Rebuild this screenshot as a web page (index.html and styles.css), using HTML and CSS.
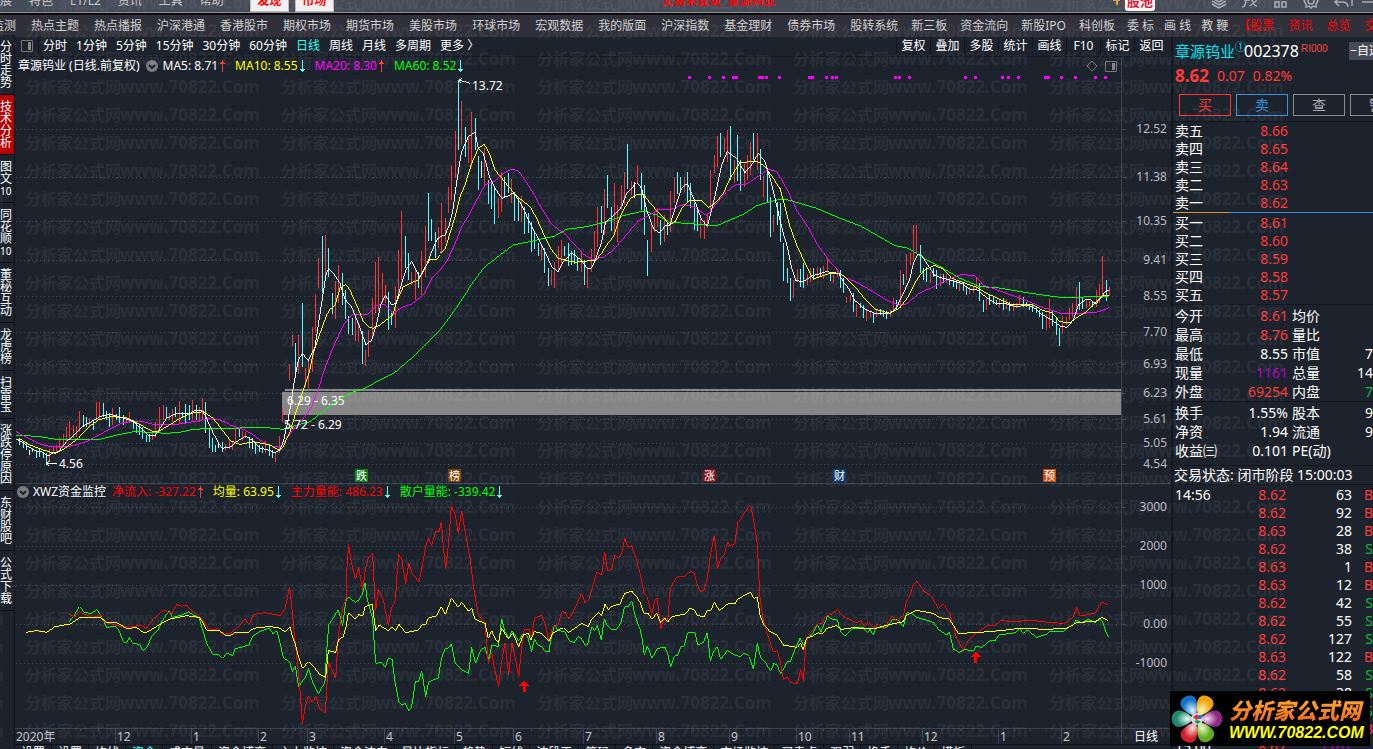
FILE: index.html
```html
<!DOCTYPE html>
<html lang="zh-CN">
<head>
<meta charset="utf-8">
<title>章源钨业 002378 日线</title>
<link rel="stylesheet" href="styles.css">
</head>
<body>
<div class="app">
  <header class="topbar">
    <div class="topbar-row">
      <nav class="menu"><button>扩展</button><button>特色</button><button>L1/L2</button><button>资讯</button><button>工具</button><button>帮助</button></nav>
      <div class="menu-tabs"><button>发现</button><button>市场</button></div>
      <div class="login">交易未登录&nbsp; 章源钨业</div>
      <div class="top-tools">
        <svg width="8" height="14" viewBox="0 0 8 14"><path d="M2 0h5v7H5v4H3V7H0z" fill="#d9a441"/></svg>
        <button class="pool">股池</button>
        <svg class="ico gap-l" width="16" height="16" viewBox="0 0 16 16"><path d="M1 5l7 4 7-4M1 8l7 4 7-4M1 11l7 4 7-4"/></svg>
        <svg class="ico" width="18" height="16" viewBox="0 0 18 16"><path d="M1 14c3 0 3-2 4-6s2-7 5-6M3 7h6M9 13l7-6M10 7c3 0 2 6 6 6"/></svg>
        <svg class="ico" width="16" height="16" viewBox="0 0 16 16"><path d="M2 2h4v4H2zM9 2h4v4H9zM2 9h4v5H2zM9 9h4v5H9z"/></svg>
        <svg class="ico" width="16" height="16" viewBox="0 0 16 16"><circle cx="8" cy="8" r="3"/><path d="M8 1l2 2 3-1 0 3 2 3-2 3v3l-3-1-2 2-2-2-3 1v-3L1 8l2-3V2l3 1z"/></svg>
        <svg class="ico" width="16" height="16" viewBox="0 0 16 16"><path d="M15 14c0-4-2-5-6-5H2M6 5L2 9l4 4"/></svg>
        <svg class="ico last" width="26" height="16" viewBox="0 0 26 16"><path d="M1 0v13M11 9h12"/></svg>
      </div>
    </div>
  </header>

  <nav class="markets">
    <div class="g1"><button>监测</button><button>热点主题</button><button>热点播报</button><button>沪深港通</button><button>香港股市</button><button>期权市场</button><button>期货市场</button><button>美股市场</button><button>环球市场</button><button>宏观数据</button><button>我的版面</button><button>沪深指数</button><button>基金理财</button><button>债券市场</button><button>股转系统</button></div>
    <div class="g2"><button>新三板</button><button>资金流向</button><button>新股IPO</button><button>科创板</button></div>
    <div class="g3"><button>委 标</button><button>画 线</button><button>教 鞭</button></div>
    <div class="g4"><button>【股票</button><button>资讯</button><button>总览</button><button>交易</button></div>
  </nav>

  <div class="body">
    <aside class="rail">
      <button>分时走势</button><button class="on">技术分析</button><button>图文<i>10</i></button><button>同花顺<i>10</i></button><button>董秘互动</button><button>龙虎榜</button><button>扫雷宝</button><button>涨跌停原因</button><button>东财股吧</button><button>公式下载</button>
    </aside>

    <main class="center">
      <div class="toolbar">
        <button class="split" aria-label="侧栏"><svg width="12" height="12" viewBox="0 0 12 12"><path d="M.5.5h11v11H.5z" fill="none" stroke="#777"/><path d="M7 2h3v8H7z" fill="#888"/></svg></button>
        <div class="periods"><button>分时</button><button>1分钟</button><button>5分钟</button><button>15分钟</button><button>30分钟</button><button>60分钟</button><button class="on">日线</button><button>周线</button><button>月线</button><button>多周期</button><button>更多 〉</button></div>
        <div class="actions"><button>复权</button><button>叠加</button><button>多股</button><button>统计</button><button>画线</button><button>F10</button><button>标记</button><button>返回</button></div>
      </div>

      <div class="legend">
        <div class="legend-in">
          <span class="title">章源钨业 (日线.前复权)</span>
          <svg class="fold" width="12" height="12" viewBox="0 0 12 12"><circle cx="6" cy="6" r="6" fill="#7d7d7d"/><path d="M3 5l3 3 3-3" fill="none" stroke="#1d232d" stroke-width="2"/></svg>
          <span class="w">MA5: 8.71<svg class="arr" viewBox="0 0 7 14"><path d="M3 1v12M1 4h5M2 3h3" stroke="#ff3b3b"/></svg></span>
          <span class="y">MA10: 8.55<svg class="arr" viewBox="0 0 7 14"><path d="M3 1v12M1 10h5M2 11h3" stroke="#5ff"/></svg></span>
          <span class="m">MA20: 8.30<svg class="arr" viewBox="0 0 7 14"><path d="M3 1v12M1 4h5M2 3h3" stroke="#ff3b3b"/></svg></span>
          <span class="g">MA60: 8.52<svg class="arr" viewBox="0 0 7 14"><path d="M3 1v12M1 10h5M2 11h3" stroke="#5ff"/></svg></span>
          <svg class="corner" width="32" height="12" viewBox="0 0 32 12"><g fill="none" stroke="#777"><path d="M6 1l5 5-5 5-5-5z"/><path d="M19.500 1.500h11v10h-11z"/></g><path d="M26 3h3v7h-3z" fill="#888"/></svg>
        </div>
      </div>

      <svg class="chart" viewBox="15 76 1156 408" role="img" aria-label="日线价格图">
        <path class="grid" d="M16 129.500H1120M16 177.500H1120M16 221.500H1120M16 260.500H1120M16 296.500H1120M16 332.500H1120M16 364.500H1120M16 393.500H1120M16 419.500H1120M16 443.500H1120M16 464.500H1120"/>
        <path class="frame" d="M1121.500 76V484M1121 129.500h5M1121 177.500h5M1121 221.500h5M1121 260.500h5M1121 296.500h5M1121 332.500h5M1121 364.500h5M1121 393.500h5M1121 419.500h5M1121 443.500h5M1121 464.500h5M15 483.500H1171"/>
        <path fill="#868686" d="M285 389H1121V391H285zM282 392H1121V415H282z"/>
        <path fill="#f0f" d="M688 76h3v3h-3zM708 76h3v3h-3zM722 76h3v3h-3zM732 76h6v3h-6zM758 76h6v3h-6zM765 76h3v3h-3zM778 76h3v3h-3zM808 76h6v3h-6zM825 76h3v3h-3zM831 76h3v3h-3zM835 76h3v3h-3zM894 76h3v3h-3zM898 76h3v3h-3zM908 76h3v3h-3zM964 76h3v3h-3zM974 76h3v3h-3zM1001 76h3v3h-3zM1007 76h3v3h-3zM1017 76h3v3h-3zM1044 76h6v3h-6zM1060 76h3v3h-3zM1074 76h3v3h-3zM1094 76h3v3h-3zM1104 76h3v3h-3z"/>

        <g class="seg" transform="translate(0 370) scale(.33333)">
          <path class="c" d="M58 205V225M70 215V235M79 218V240M97 235V245M109 240V265M118 235V262M130 245V265M139 250V285M250 135V170M259 142V170M280 150V180M310 98V140M319 122V150M328 130V172M349 132V150M358 112V160M370 135V165M400 150V178M409 160V190M418 165V195M427 170V207M440 195V215M449 192V215M500 110V145M527 110V140M547 125V142M557 102V160M568 105V150M589 105V150M616 95V188M628 175V235M637 205V245M646 225V245M667 215V247"/>
          <path class="r" d="M148 237V275M160 232V250M169 225V245M178 200V235M190 193V225M199 172V220M208 152V210M220 165V205M229 168V200M238 122V185M268 145V170M289 97V155M298 95V150M337 115V165M379 140V160M388 125V160M458 190V210M467 155V205M478 110V185M490 105V150M508 130V150M517 118V155M538 92V160M577 90V150M598 110V155M607 83V150M676 222V240M688 210V237"/>
          <path class="w" d="M88 240V255M657 215V235"/>
          <path class="g" d="M48 195 120 200 180 210 240 210 300 208 350 195 400 185 450 187 500 190 540 187 580 178 640 175 690 176"/>
          <path class="m" d="M48 185 80 202 120 222 150 230 215 228 260 215 300 193 340 172 370 157 400 155 430 155 460 163 500 163 540 162 580 155 625 146 660 150 690 163"/>
          <path class="y" d="M48 208 65 210 90 225 130 240 165 250 190 238 235 205 265 172 295 150 330 140 380 143 410 158 440 175 460 185 475 185 500 170 540 145 570 130 610 125 640 145 665 178 690 210"/>
          <path class="w" d="M48 208 60 212 85 230 110 245 125 246 145 258 160 248 175 245 200 215 230 188 250 168 270 157 300 140 330 132 350 138 380 148 400 155 420 172 445 195 465 198 480 175 500 145 530 130 570 130 585 122 605 122 615 135 640 190 665 235 690 232"/>
          <path class="w" d="M172 280H139M148 271 139 280 148 289"/>
        </g>
        <g class="seg" transform="translate(230 190) scale(.33333)">
          <path class="r" d="M7 755V780M16 718V755M37 722V752M46 725V745M106 752V788M136 790V815M148 738V790M157 655V697M178 522V570M187 435V467M205 435V552M226 534V590M235 510V593M247 410V545M256 312V425M265 205V293M286 135V260M316 272V387M325 225V340M376 380V453M385 395V455M406 480V528M415 420V500M427 325V445M436 215V370M445 202V362M457 250V340M466 285V340M496 290V413M505 180V320M514 63V270M544 245V285M556 238V330M574 182V315M586 108V260M625 110V175"/>
          <path class="c" d="M28 718V740M58 740V775M76 755V792M88 765V785M97 768V790M118 762V797M127 780V805M196 460V545M217 340V530M277 138V308M295 175V260M307 310V372M337 250V345M346 300V387M355 378V432M367 385V435M397 423V522M475 305V420M484 370V405M526 138V235M535 188V270M565 245V293M595 10V153M604 88V153M616 125V205"/>
          <path class="g" d="M0 716 60 712 110 713 160 718 200 705 240 695 290 655 340 622 370 605 400 597 450 570 495 547 550 500 600 450 630 420"/>
          <path class="m" d="M0 705 40 718 70 735 100 757 130 770 155 768 190 718 220 685 245 650 262 605 290 520 315 460 340 405 365 375 410 375 445 343 465 345 490 372 515 352 545 343 580 315 605 265 630 240"/>
          <path class="y" d="M0 752 30 763 70 755 120 765 145 780 157 775 180 725 200 660 220 600 238 545 250 490 270 430 290 375 300 358 315 345 330 295 347 283 360 300 380 345 400 395 415 410 430 415 450 405 488 375 500 335 520 290 540 280 565 270 580 240 600 208 622 207 630 195"/>
          <path class="w" d="M67 745V778M0 772 20 755 48 738 65 750 90 775 110 778 135 788 150 780 160 755 172 700 183 640 190 590 205 510 217 490 235 512 255 470 268 385 278 320 288 255 296 235 310 250 330 280 345 328 365 350 385 400 408 465 425 450 440 400 452 345 466 315 485 345 498 340 512 290 528 240 545 213 560 245 570 262 590 225 605 185 622 147 630 143"/>
        </g>
        <g class="seg" transform="translate(440 70) scale(.33333)">
          <path class="r" d="M4 398V545M16 445V515M25 350V430M34 288V390M46 183V325M64 93V225M85 200V280M94 125V290M133 235V345M175 385V445M184 305V425M214 328V400M244 378V455M304 525V570M334 600V645M343 577V655M355 528V600M364 510V580M424 545V605M442 590V655M454 537V605M463 483V575M472 412V530M493 358V495M523 338V487M532 405V515M544 345V420M553 305V405M574 333V375M592 285V340M634 460V545M643 430V485M652 415V470M673 435V515M691 363V485M703 320V400M733 320V365M781 440V505M793 450V507M802 430V475M811 300V430M823 255V310M832 198V290M853 205V245M862 180V275M883 270V340M913 283V350M922 255V330M931 215V315M952 190V300M970 318V380M1000 435V485"/>
          <path class="c" d="M55 30V240M76 170V262M106 143V240M115 258V360M145 330V403M154 330V417M163 350V462M193 320V380M205 310V370M223 365V453M235 380V453M253 410V493M265 430V490M274 455V545M284 490V537M295 520V557M313 535V610M325 595V648M373 528V558M385 518V587M394 543V585M403 540V582M412 560V602M433 570V645M484 408V490M502 315V413M514 410V483M562 222V357M604 308V420M613 345V495M622 510V617M661 450V525M682 455V495M712 305V372M721 320V368M742 305V400M751 340V415M763 400V480M772 410V482M841 188V260M871 168V330M892 195V333M901 270V362M940 190V270M961 238V330M982 298V398M991 380V500M1012 395V465"/>
          <path class="g" d="M0 780 30 740 65 690 100 635 135 590 180 555 220 525 270 515 310 505 340 500 380 478 440 470 500 455 550 437 610 423 650 435 690 457 740 460 830 467 870 450 910 433 950 407 990 395 1020 388"/>
          <path class="m" d="M0 600 20 575 50 510 65 470 90 430 110 390 135 345 165 333 190 310 215 298 235 302 255 330 280 370 305 415 335 463 375 492 400 520 430 552 455 568 490 562 520 540 550 505 595 453 625 437 655 420 690 420 730 403 765 412 800 437 830 400 860 365 885 345 920 342 950 322 985 297 1010 305 1020 323"/>
          <path class="y" d="M0 550 15 538 30 490 45 440 60 380 75 345 95 280 115 235 133 223 150 255 165 300 190 330 210 355 235 382 270 410 290 445 310 490 335 540 355 565 405 577 440 573 465 573 485 550 500 525 520 500 535 455 550 420 570 387 590 373 610 373 635 405 665 437 690 465 705 455 725 415 750 390 785 392 805 412 825 400 850 370 870 325 900 278 950 273 975 290 1000 325 1020 357"/>
          <path class="w" d="M124 272V323M583 335V385M0 500 15 495 28 465 38 425 48 350 58 285 65 245 85 200 105 187 115 235 130 250 150 325 165 355 185 385 205 378 220 368 235 388 250 415 270 460 300 515 315 545 335 590 355 605 370 575 395 548 410 560 425 572 443 598 455 593 468 565 485 515 497 455 520 438 545 410 560 370 590 338 605 355 620 420 640 475 658 490 675 468 690 465 710 400 725 355 742 340 765 395 785 450 802 468 815 420 830 355 845 285 862 245 890 265 915 308 935 285 955 250 975 275 990 325 1005 385 1020 450"/>
          <path class="w" d="M90 40 57 30M67 26 57 30 63 40"/>
        </g>
        <g class="seg" transform="translate(780 120) scale(.33333)">
          <path class="c" d="M1 250V365M10 370V483M22 443V490M31 475V543M61 447V500M70 430V505M100 445V480M121 443V470M151 455V483M181 450V503M190 473V520M220 520V577M241 550V565M250 555V593M280 575V608M301 567V585M310 570V590M319 572V597M349 540V570M370 462V495M421 375V458M430 445V480M439 440V487M460 443V470M469 450V507M490 462V490M508 475V495M520 480V500M529 483V507M550 490V513M559 497V525M598 488V543M610 540V575M628 525V555M640 530V553M649 540V555M670 533V570M688 545V573M730 530V560M739 545V560M748 553V570M757 555V575M769 560V580M778 570V590M787 575V627M817 570V618M829 590V645M838 625V678M898 487V570M907 530V567M937 545V560M979 480V543"/>
          <path class="r" d="M40 480V535M52 447V487M82 463V495M91 443V485M112 440V470M130 438V477M142 418V460M160 465V490M172 447V470M199 530V548M211 525V545M229 552V592M259 568V602M271 570V590M289 570V590M331 570V592M340 535V575M361 450V560M379 402V480M391 398V435M400 315V420M409 315V400M451 455V488M481 462V497M499 463V490M538 488V512M568 500V522M580 498V518M589 475V510M619 537V570M658 537V563M679 538V568M700 548V573M709 550V565M718 525V553M799 583V630M808 537V625M847 588V642M859 590V615M868 563V600M877 548V590M889 500V580M919 537V563M928 543V560M949 510V560M958 492V550M967 408V535M988 500V528"/>
          <path class="g" d="M0 238 25 240 110 265 180 295 240 317 290 345 345 377 385 385 440 420 490 445 540 475 600 500 650 503 740 518 830 531 890 532 985 528"/>
          <path class="m" d="M0 170 25 215 50 270 80 315 110 370 150 425 190 470 230 487 270 510 320 540 350 553 380 552 415 522 460 500 500 480 545 463 585 468 610 495 680 520 740 542 790 563 850 582 945 578 970 570 988 562"/>
          <path class="y" d="M0 205 15 260 30 320 50 375 80 440 100 477 145 462 180 460 200 475 225 500 255 537 285 567 330 580 360 563 385 530 410 480 430 452 462 436 490 447 515 475 590 502 620 520 690 552 760 555 790 572 815 578 840 605 870 608 895 590 920 575 950 545 970 525 988 528"/>
          <path class="w" d="M0 300 10 340 22 380 35 445 48 482 70 485 95 468 140 455 175 460 190 485 208 508 225 542 255 568 290 582 330 580 350 562 370 520 390 475 400 430 412 405 422 403 440 430 465 467 500 478 545 490 570 508 590 508 620 533 650 552 680 552 710 560 745 555 765 565 785 583 815 600 840 618 860 622 880 600 895 555 915 540 930 538 948 552 965 530 975 515 988 510"/>
        </g>

        <g class="note">
          <text x="472" y="90">13.72</text><text x="59" y="468">4.56</text>
          <text x="287" y="405">6.29 - 6.35</text><text x="284" y="429">5.72 - 6.29</text>
        </g>
        <g class="badge">
          <rect x="355" y="469" width="13" height="13" fill="#0a7a12"/><text x="356" y="480">跌</text>
          <rect x="448" y="469" width="13" height="13" fill="#7d3c00"/><text x="449" y="480">榜</text>
          <rect x="703" y="469" width="13" height="13" fill="#7d0d14"/><text x="704" y="480">涨</text>
          <rect x="833" y="469" width="13" height="13" fill="#073a70"/><text x="834" y="480">财</text>
          <rect x="1043" y="469" width="13" height="13" fill="#c24a0c"/><text x="1044" y="480">预</text>
        </g>
        <g class="scale">
          <text x="1167" y="133">12.52</text><text x="1167" y="181">11.38</text><text x="1167" y="225">10.35</text><text x="1167" y="264">9.41</text><text x="1167" y="300">8.55</text><text x="1167" y="336">7.70</text><text x="1167" y="368">6.93</text><text x="1167" y="397">6.23</text><text x="1167" y="423">5.61</text><text x="1167" y="447">5.05</text><text x="1167" y="468">4.54</text>
        </g>
      </svg>

      <div class="legend low">
        <div class="legend-in">
          <svg class="fold" width="12" height="12" viewBox="0 0 12 12"><circle cx="6" cy="6" r="6" fill="#7d7d7d"/><path d="M3 5l3 3 3-3" fill="none" stroke="#1d232d" stroke-width="2"/></svg>
          <span class="title">XWZ资金监控</span>
          <span class="r">净流入: -327.22<svg class="arr" viewBox="0 0 7 14"><path d="M3 1v12M1 4h5M2 3h3" stroke="#ff3b3b"/></svg></span>
          <span class="y">均量: 63.95<svg class="arr" viewBox="0 0 7 14"><path d="M3 1v12M1 10h5M2 11h3" stroke="#5ff"/></svg></span>
          <span class="r">主力量能: 486.23<svg class="arr" viewBox="0 0 7 14"><path d="M3 1v12M1 10h5M2 11h3" stroke="#5ff"/></svg></span>
          <span class="g">散户量能: -339.42<svg class="arr" viewBox="0 0 7 14"><path d="M3 1v12M1 10h5M2 11h3" stroke="#5ff"/></svg></span>
        </div>
      </div>

      <svg class="chart" viewBox="15 500 1156 244" role="img" aria-label="资金监控图">
        <path class="grid" d="M16 507.500H1120M16 546.500H1120M16 585.500H1120M16 624.500H1120M16 663.500H1120"/>
        <path class="frame" d="M1121.500 500V744M1121 507.500h5M1121 546.500h5M1121 585.500h5M1121 624.500h5M1121 663.500h5M15 728.500H1171M115.500 729v15M191.500 729v15M258.500 729v15M307.500 729v15M384.500 729v15M454.500 729v15M513.500 729v15M583.500 729v15M656.500 729v15M729.500 729v15M796.500 729v15M849.500 729v15M922.500 729v15M998.500 729v15M1061.500 729v15M80.500 729v2M98.500 729v2M134.500 729v2M153.500 729v2M172.500 729v2M209.500 729v2M225.500 729v2M242.500 729v2M270.500 729v2M283.500 729v2M295.500 729v2M327.500 729v2M346.500 729v2M365.500 729v2M402.500 729v2M419.500 729v2M437.500 729v2M469.500 729v2M484.500 729v2M499.500 729v2M531.500 729v2M548.500 729v2M566.500 729v2M602.500 729v2M620.500 729v2M638.500 729v2M675.500 729v2M693.500 729v2M711.500 729v2M746.500 729v2M763.500 729v2M780.500 729v2M810.500 729v2M823.500 729v2M836.500 729v2M868.500 729v2M886.500 729v2M904.500 729v2M941.500 729v2M960.500 729v2M979.500 729v2M1014.500 729v2M1030.500 729v2M1046.500 729v2"/>
        <g class="seg" transform="translate(0 370) scale(.33333)">
          <path class="g" d="M207 755 222 738 238 710 255 728 275 730 290 718 300 732 320 773 345 768 355 777 370 815 380 818 388 802 398 820 418 823 430 843 440 833 455 800 475 780 485 755 508 722 517 742 545 735 565 725 580 735 597 742 605 770 620 820 640 855 658 855 668 865 680 850 690 853"/>
          <path class="f" d="M207 733 225 740 238 725 260 735 275 742 290 740 300 733 310 755 340 763 365 770 400 770 420 765 440 775 460 747 490 720 515 730 530 703 545 709 560 705 575 722 600 740 610 755 630 780 655 776 668 795 680 790 690 790"/>
          <path class="y" d="M78 787 110 782 140 787 165 770 210 762 240 743 300 742 320 757 350 758 380 775 410 773 430 787 440 787 480 763 510 747 560 737 600 743 620 780 660 783 675 795 690 798"/>
        </g>
        <g class="seg" transform="translate(230 485) scale(.33333)">
          <path class="g" d="M0 508 8 513 15 492 57 480 68 453 95 437 118 430 130 447 140 437 148 465 160 517 180 533 187 560 196 543 206 607 217 588 227 577 236 550 247 590 266 627 285 590 290 500 296 420 325 374 338 422 347 350 356 335 375 352 387 345 398 325 405 293 412 345 428 400 433 480 437 535 455 532 466 547 475 520 486 523 495 590 507 650 516 660 525 655 536 677 545 665 556 590 566 590 575 557 587 635 596 590 625 580 634 520 646 490 655 490 664 477 676 535 695 555 716 565 725 487 737 535 752 495 765 487 777 525 785 480 805 485 815 402 825 440 837 460 846 437 866 467 880 445 893 455 905 500 913 463 923 480 935 485 946 500 957 500 965 450 974 420 985 437 1005 440 1018 467 1033 473 1043 455 1053 458 1066 482 1073 478 1085 425 1094 437 1102 420 1114 465 1123 402 1133 423 1145 433 1160 433 1173 412 1184 365 1195 365 1205 347 1215 390 1225 420 1230 433"/>
          <path class="f" d="M0 445 20 430 45 403 58 418 70 388 105 383 150 392 165 372 172 340 179 305 186 370 193 450 205 560 212 640 217 718 225 670 235 632 248 655 257 632 268 670 286 683 295 530 317 580 325 450 340 360 348 345 350 260 356 178 364 230 376 283 386 247 398 318 405 260 415 217 428 205 432 290 437 378 445 313 460 345 475 423 484 370 496 345 501 270 506 208 516 225 527 298 536 235 546 265 567 292 580 225 587 182 596 160 605 182 616 140 628 140 634 110 640 185 647 253 656 170 664 62 676 90 685 147 695 77 706 145 720 220 732 315 745 390 765 412 775 535 785 502 793 550 806 605 815 530 825 473 836 570 846 475 856 520 866 580 875 485 883 433 897 433 905 455 914 398 935 392 947 420 956 470 968 425 985 420 995 380 1006 382 1017 403 1035 370 1055 323 1065 355 1078 340 1100 262 1115 270 1124 200 1133 258 1145 252 1155 210 1165 220 1175 205 1184 160 1194 187 1205 182 1218 220 1230 263"/>
          <path class="y" d="M0 453 15 443 55 443 70 430 115 425 145 427 165 440 180 425 187 455 195 475 205 515 218 550 235 530 255 550 268 568 287 577 295 497 317 502 325 465 340 455 348 425 355 383 375 403 387 388 398 393 405 365 427 358 437 437 447 420 475 437 486 425 497 438 507 418 527 443 565 435 578 418 587 418 595 400 620 392 634 365 646 388 664 340 685 367 695 352 715 378 725 370 735 403 765 415 775 460 785 437 795 460 805 473 815 430 835 462 848 443 866 485 880 450 895 445 903 465 913 440 935 445 957 467 968 445 985 435 1000 428 1015 443 1035 430 1055 415 1075 425 1085 402 1105 383 1115 392 1125 358 1135 373 1150 362 1170 357 1184 325 1205 318 1220 335 1230 352"/>
          <path class="up" d="M882 585 898 603H887V621H878V603H867z"/>
        </g>
        <g class="seg" transform="translate(640 485) scale(.33333)">
          <path class="g" d="M0 433 7 465 13 510 22 483 36 520 52 490 75 487 83 505 92 547 102 515 113 510 122 487 133 482 143 443 165 443 173 480 190 473 202 443 211 528 220 500 232 485 242 523 262 497 280 508 300 515 315 503 328 515 340 553 352 473 362 520 375 530 392 558 402 535 412 540 422 567 432 548 442 530 452 528 462 500 480 460 490 480 503 455 515 450 532 420 543 440 563 392 575 402 592 405 602 440 615 452 635 432 670 427 682 443 690 433 700 450 708 428 740 427 757 405 775 405 790 425 800 383 815 385 830 397 880 412 897 435 920 450 928 440 940 492 957 502 975 493 1000 498 1008 483 1025 487 1050 467 1065 468 1077 450 1125 443 1138 430 1150 445 1163 435 1190 458 1220 447 1230 440 1270 440 1285 427 1300 420 1308 405 1325 413 1345 403 1365 413 1380 403 1388 410 1397 440 1405 455"/>
          <path class="f" d="M0 263 12 325 22 335 35 390 45 345 52 340 62 433 72 397 83 410 91 308 110 277 135 273 152 258 163 265 172 300 183 320 193 315 202 280 212 205 223 152 228 195 233 248 243 220 253 210 263 170 270 182 285 175 293 113 305 100 312 83 332 62 340 100 351 170 356 250 358 320 368 395 383 450 400 500 412 497 420 525 430 583 442 577 453 593 472 597 482 553 490 587 498 475 510 445 533 417 547 417 555 395 575 387 593 374 610 395 650 413 662 407 673 425 685 410 700 427 715 418 732 432 745 410 757 393 768 407 790 392 798 355 812 325 820 300 830 287 850 318 873 332 895 370 910 357 930 387 940 425 950 460 970 495 985 467 1005 447 1040 423 1065 422 1080 407 1130 410 1165 405 1230 413 1275 415 1300 395 1310 367 1320 393 1365 385 1385 350 1405 360"/>
          <path class="y" d="M0 352 12 385 25 385 35 403 50 385 62 413 75 400 83 412 95 395 135 387 150 370 163 375 173 392 193 395 203 375 212 377 223 352 238 377 265 355 285 357 293 342 332 322 342 340 352 337 360 390 372 420 390 440 410 450 430 480 472 487 482 475 490 495 500 458 515 455 535 443 548 447 560 430 590 422 605 433 640 428 700 432 750 418 790 410 800 390 828 376 880 385 900 398 928 402 955 445 1010 443 1080 437 1140 430 1220 433 1280 430 1310 413 1370 408 1385 397 1405 408"/>
          <path class="up" d="M1008 498 1023 516H1012V534H1003V516H993z"/>
        </g>
        <g class="scale">
          <text x="1167" y="511">3000</text><text x="1167" y="550">2000</text><text x="1167" y="589">1000</text><text x="1167" y="628">0.00</text><text x="1167" y="667">-1000</text>
        </g>
        <g class="dates">
          <text x="16" y="741">2020年</text><text x="117" y="741">12</text><text x="193" y="741">1</text><text x="260" y="741">2</text><text x="309" y="741">3</text><text x="386" y="741">4</text><text x="456" y="741">5</text><text x="515" y="741">6</text><text x="585" y="741">7</text><text x="658" y="741">8</text><text x="731" y="741">9</text><text x="798" y="741">10</text><text x="851" y="741">11</text><text x="924" y="741">12</text><text x="1000" y="741">1</text><text x="1063" y="741">2</text>
          <text x="1134" y="741" class="day">日线</text>
        </g>
      </svg>

      <div class="tabs"><button>设置</button><button>设置</button><button>均线</button><button class="on">资金</button><button>成交量</button><button>资金博弈</button><button>主力监控</button><button>资金流向</button><button>量比指标</button><button>趋势</button><button>短线</button><button>波段王</button><button>筹码</button><button>多空</button><button>资金博弈</button><button>市场监控</button><button>买卖点</button><button>强弱</button><button>换手</button><button>均价</button><button>模板</button></div>
    </main>

    <aside class="quote">
      <div class="q-name"><b>章源钨业</b><sup>①</sup><span class="code">002378</span><em>RI000</em><button>−自选</button></div>
      <div class="q-price"><strong>8.62</strong><span>0.07</span><span>0.82%</span></div>
      <div class="q-btns"><button class="buy">买</button><button class="sell">卖</button><button>查</button><button>警</button></div>

      <dl class="book"><dt>卖五</dt><dd>8.66</dd><dt>卖四</dt><dd>8.65</dd><dt>卖三</dt><dd>8.64</dd><dt>卖二</dt><dd>8.63</dd><dt>卖一</dt><dd>8.62</dd></dl>
      <div class="ratio"></div>
      <dl class="book under"><dt>买一</dt><dd>8.61</dd><dt>买二</dt><dd>8.60</dd><dt>买三</dt><dd>8.59</dd><dt>买四</dt><dd>8.58</dd><dt>买五</dt><dd>8.57</dd></dl>

      <div class="info">
        <span>今开</span><span class="r">8.61</span><span>均价</span><span></span>
        <span>最高</span><span class="r">8.76</span><span>量比</span><span></span>
        <span>最低</span><span>8.55</span><span>市值</span><span>7</span>
        <span>现量</span><span class="p">1161</span><span>总量</span><span>14</span>
        <span>外盘</span><span class="r">69254</span><span>内盘</span><span class="gn">7</span>
      </div>
      <div class="info">
        <span>换手</span><span>1.55%</span><span>股本</span><span>9</span>
        <span>净资</span><span>1.94</span><span>流通</span><span>9</span>
        <span>收益㈢</span><span>0.101</span><span>PE(动)</span><span></span>
      </div>
      <div class="state">交易状态: 闭市阶段 15:00:03</div>
      <table class="ticks">
        <tr><td>14:56</td><td>8.62</td><td>63</td><td class="r">B</td></tr>
        <tr><td></td><td>8.62</td><td>92</td><td class="r">B</td></tr>
        <tr><td></td><td>8.63</td><td>28</td><td class="r">B</td></tr>
        <tr><td></td><td>8.62</td><td>38</td><td class="gn">S</td></tr>
        <tr><td></td><td>8.63</td><td>1</td><td class="r">B</td></tr>
        <tr><td></td><td>8.63</td><td>12</td><td class="r">B</td></tr>
        <tr><td></td><td>8.62</td><td>42</td><td class="gn">S</td></tr>
        <tr><td></td><td>8.62</td><td>55</td><td class="gn">S</td></tr>
        <tr><td></td><td>8.62</td><td>127</td><td class="gn">S</td></tr>
        <tr><td></td><td>8.63</td><td>122</td><td class="r">B</td></tr>
        <tr><td></td><td>8.62</td><td>58</td><td class="gn">S</td></tr>
        <tr><td></td><td>8.62</td><td>38</td><td class="gn">S</td></tr>
        <tr><td></td><td></td><td></td><td class="gn">S</td></tr>
        <tr><td></td><td></td><td></td><td class="r">B</td></tr>
        <tr><td>15:00</td><td>8.62</td><td class="p">1161</td><td></td></tr>
      </table>
    </aside>
  </div>

  <svg class="watermark" aria-hidden="true">
    <defs><pattern id="wm" x="25" y="17" width="256" height="28" patternUnits="userSpaceOnUse"><text x="0" y="20">分析家公式网</text><text class="url" x="95" y="20">www.70822.Com</text></pattern></defs>
    <rect width="100%" height="100%" fill="url(#wm)"/>
  </svg>

  <div class="brand">
    <svg width="54" height="52" viewBox="0 0 54 52">
      <defs>
        <radialGradient id="b1" cy=".7"><stop offset="0" stop-color="#dff4ff"/><stop offset="1" stop-color="#1273c8"/></radialGradient>
        <radialGradient id="b2" cy=".7"><stop offset="0" stop-color="#fff9b8"/><stop offset="1" stop-color="#f0a40c"/></radialGradient>
        <radialGradient id="b3" cy=".7"><stop offset="0" stop-color="#fbe3f7"/><stop offset="1" stop-color="#8d2a86"/></radialGradient>
        <radialGradient id="b4" cy=".7"><stop offset="0" stop-color="#f1ffc9"/><stop offset="1" stop-color="#61ad1f"/></radialGradient>
        <radialGradient id="b5" cy=".7"><stop offset="0" stop-color="#ffe3e3"/><stop offset="1" stop-color="#d21f2c"/></radialGradient>
        <radialGradient id="b6" cy=".7"><stop offset="0" stop-color="#eafff4"/><stop offset="1" stop-color="#20876a"/></radialGradient>
      </defs>
      <g transform="translate(27 26)">
        <path transform="rotate(-28)" fill="url(#b1)" d="M0-3C-5-8-9-14-8-20-6-27 6-27 8-20 9-14 5-8 0-3z"/>
        <path transform="rotate(28)" fill="url(#b2)" d="M0-3C-5-8-9-14-8-20-6-27 6-27 8-20 9-14 5-8 0-3z"/>
        <path transform="rotate(89)" fill="url(#b3)" d="M0-3C-5-8-9-14-8-20-6-27 6-27 8-20 9-14 5-8 0-3z"/>
        <path transform="rotate(150)" fill="url(#b4)" d="M0-3C-5-8-9-14-8-20-6-27 6-27 8-20 9-14 5-8 0-3z"/>
        <path transform="rotate(207)" fill="url(#b5)" d="M0-3C-5-8-9-14-8-20-6-27 6-27 8-20 9-14 5-8 0-3z"/>
        <path transform="rotate(271)" fill="url(#b6)" d="M0-3C-5-8-9-14-8-20-6-27 6-27 8-20 9-14 5-8 0-3z"/>
        <circle r="6" fill="#ddd"/><path d="M-4-2 0-5 3-1-1 1z" fill="#d33"/><path d="M-3 2 1 1 4 3 0 5z" fill="#295"/><circle cx="3" cy="-2" r="2" fill="#36c"/>
      </g>
    </svg>
    <div><p class="cn">分析家公式网</p><p class="en">WWW.70822.COM</p></div>
  </div>
</div>
</body>
</html>
```
FILE: styles.css
```css
* { box-sizing: border-box; margin: 0; padding: 0; }
body {
  background: #1d232d;
  color: #fff;
  font: 12px/16px "Noto Sans", "Noto Sans CJK SC", sans-serif;
}
button { background: none; border: 0; color: inherit; font: inherit; white-space: nowrap; cursor: pointer; flex: none; }
p { white-space: nowrap; }
.app { position: relative; height: 100vh; overflow: hidden; display: flex; flex-direction: column; }

/* top menu */
.topbar { height: 15px; flex: none; overflow: hidden; background: #454b57; border-bottom: 2px solid #0b0b0d; box-shadow: inset 0 -1px #8d8d8d; }
.topbar-row { display: flex; align-items: center; height: 22px; margin-top: -10px; color: #c9c9c9; }
.menu { display: flex; gap: 17px; margin-left: -12px; align-items: center; }
.menu-tabs { display: flex; gap: 6px; margin-left: 26px; align-self: stretch; }
.menu-tabs button { width: 39px; background: #f0f0f0; color: #f00; border: 1px solid #bbb; font-weight: bold; }
.login { flex: 1; text-align: center; color: #f00; font-weight: bold; padding-right: 10px; }
.top-tools { display: flex; align-items: center; gap: 14px; margin-right: -4px; }
.top-tools .pool { background: #f5f5f5; color: #e01030; font-weight: bold; font-size: 13px; line-height: 20px; border-radius: 3px; padding: 0 2px; margin-left: -10px; }
.ico { fill: none; stroke: #a9adb5; stroke-width: 1.5; }
.gap-l { margin-left: 42px; }
.ico.last { margin-left: -12px; }

/* market navigation */
.markets { display: flex; flex: none; height: 22px; align-items: center; background: #30303a; color: #cfcfcf; overflow: hidden; }
.markets div { display: flex; flex: none; }
.g1 { gap: 15px; margin-left: -8px; }
.g2 { gap: 13px; margin-left: 13px; }
.g3 { gap: 10px; margin-left: 12px; }
.markets .g4 { gap: 14px; margin-left: 10px; color: #f00; }

.body { flex: 1; min-height: 0; display: flex; }

/* left rail */
.rail { width: 15px; flex: none; border-right: 1px solid #10141a; overflow: hidden; margin-top: -2px; background: #1d232d; position: relative; }
.rail button { display: block; width: 14px; padding: 6px 2px 5px 0; border-bottom: 1px solid #0e1218; font-size: 12px; line-height: 12px; white-space: normal; word-break: break-all; text-align: left; }
.rail i { font-style: normal; font-size: 10px; display: block; white-space: nowrap; word-break: normal; }
.rail .on { background: #b40000; }

/* chart column */
.center { flex: 1; min-width: 0; display: flex; flex-direction: column; overflow: hidden; }
.toolbar { display: flex; flex: none; height: 20px; align-items: center; border-bottom: 1px solid #151a22; padding-bottom: 2px; }
.split { width: 24px; height: 17px; border-right: 1px solid #11161d; display: flex; align-items: center; justify-content: center; }
.periods { display: flex; gap: 9px; margin-left: 4px; flex: 1; min-width: 0; }
.periods .on { color: #3fe; }
.actions { display: flex; margin-right: 3px; }
.actions button { width: 34px; border-left: 1px solid #11161d; height: 17px; }
.legend { display: flex; flex: none; height: 19px; padding-right: 49px; }
.legend-in { flex: 1; display: flex; align-items: center; padding: 0 0 2px 3px; border-right: 1px solid #3b424e; white-space: nowrap; }
.legend span { display: flex; align-items: center; margin-left: 9px; }
.legend .title { margin: 0 6px 0 0; }
.legend .fold + span { margin-left: 5px; }
.legend .arr { width: 7px; height: 14px; margin-left: 1px; fill: none; shape-rendering: crispEdges; }
.legend .corner { margin-left: auto; margin-right: 3px; }
.legend.low { height: 16px; }
.legend.low .legend-in { padding: 0 0 0 2px; }
.legend.low .title { margin: 0 6px 0 4px; }
.legend.low .title + span { margin-left: 0; }
.legend .y { color: #ff0; }
.legend .m { color: #f0f; }
.legend .g { color: #0f0; }
.legend .r { color: #f00; }

.chart { display: block; width: 100%; height: auto; flex: none; }
.chart path { shape-rendering: crispEdges; }
.grid { stroke: #424955; stroke-width: 1; stroke-dasharray: 1 3; }
.frame { stroke: #3b424e; fill: none; }
.seg path { fill: none; stroke-width: 3; }
.seg .r { stroke: #ff3030; }
.seg .f { stroke: #f00; }
.seg .c { stroke: #5ff; }
.seg .w { stroke: #fff; }
.seg .y { stroke: #ff0; }
.seg .m { stroke: #f0f; }
.seg .g { stroke: #0f0; }
.seg .up { fill: #f00; }
.note { fill: #fff; }
.badge text { fill: #fff; font-size: 11px; }
.scale { fill: #b9bcc2; text-anchor: end; }
.dates { fill: #c4c6ca; }
.dates .day { fill: #fff; }

.tabs { display: flex; flex: none; border-top: 1px solid #0d1117; overflow: hidden; }
.tabs button { padding: 0 6px; border-right: 1px solid #0d1117; }
.tabs .on { color: #5ff; }

/* quote column */
.quote { width: 202px; flex: none; border-left: 2px solid #12161d; font-size: 14px; line-height: 18px; overflow: hidden; white-space: nowrap; }
.q-name { display: flex; align-items: center; height: 27px; padding-left: 2px; }
.q-name b { font-size: 15px; font-weight: normal; color: #00e4f5; }
.q-name sup { font-size: 11px; line-height: 20px; align-self: flex-start; color: #00e4f5; margin-right: -2px; }
.q-name .code { font-size: 16px; }
.q-name em { font: 10px/20px "Liberation Sans", sans-serif; color: #f44; align-self: flex-start; padding-top: 2px; margin-left: 2px; }
.q-name button { margin-left: auto; margin-right: -9px; background: #454a56; font-size: 12px; line-height: 18px; padding: 0 1px; }
.q-price { display: flex; align-items: center; gap: 8px; height: 24px; padding-left: 2px; color: #ff3838; }
.q-price strong { font-size: 17px; }
.q-btns { display: flex; gap: 5px; padding: 6px 0 5px 6px; }
.q-btns button { width: 52px; height: 22px; line-height: 20px; border: 1px solid #8b8b8b; color: #a9a9a9; }
.q-btns .buy { border-color: #f33; color: #f33; }
.q-btns .sell { border-color: #3d8fe0; color: #3d8fe0; }
.book { display: grid; grid-template-columns: 28px 85px; border-top: 1px solid #12161d; padding-left: 2px; }
.book dd { text-align: right; color: #ff3838; }
.book.under { border: 0; padding-top: 1px; }
.ratio { height: 1px; background: linear-gradient(90deg, #d9921f 57px, #3d8fe0 57px); }
.info { display: grid; grid-template-columns: 28px 85px 40px 1fr; line-height: 19px; border-top: 1px solid #12161d; padding: 1px 0 0 2px; }
.info span:nth-child(even) { text-align: right; }
.info span:nth-child(4n+3) { padding-left: 4px; }
.info .r, .ticks .r { color: #ff3838; }
.info .p, .ticks .p { color: #b000b8; }
.info .gn, .ticks .gn { color: #10b93c; }
.state { border-top: 1px solid #12161d; border-bottom: 1px solid #12161d; padding-left: 1px; margin: 5px 0 1px; }
.ticks { border-collapse: collapse; table-layout: fixed; width: 100%; }
.ticks td { text-align: right; line-height: 18px; height: 18px; }
.ticks td:nth-child(1) { text-align: left; width: 45px; padding-left: 2px; }
.ticks td:nth-child(2) { width: 68px; color: #ff3838; }
.ticks td:nth-child(3) { width: 66px; }

.watermark { position: absolute; inset: 0 auto 0 0; width: 94%; height: 100%; pointer-events: none; opacity: .05; fill: #fff; font-size: 16px; font-weight: bold; font-family: "Open Sans", "Noto Sans CJK SC", sans-serif; }
.watermark .url { font-size: 17px; }

.brand { position: absolute; right: 3px; bottom: 3px; width: 200px; height: 55px; background: #000; display: flex; align-items: center; gap: 5px; }
.brand .cn { font: italic 900 22px/28px "Noto Sans CJK SC", sans-serif; color: transparent; background: linear-gradient(#ffb52e, #f0641a); background-clip: text; -webkit-background-clip: text; }
.brand .en { font: italic bold 16px/20px "Liberation Sans", sans-serif; color: #ff0; }
```
